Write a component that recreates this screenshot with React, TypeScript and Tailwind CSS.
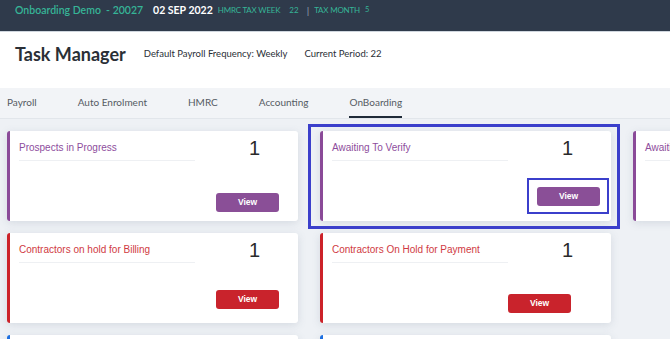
import React from "react";

type Card = {
  title: string;
  color: "purple" | "red" | "blue";
  btnLeft: string;
  btnTop: string;
  highlight?: boolean;
};

const cards: Card[] = [
  { title: "Prospects in Progress", color: "purple", btnLeft: "ml-[197px]", btnTop: "mt-[32px]" },
  { title: "Awaiting To Verify", color: "purple", btnLeft: "ml-[205px]", btnTop: "mt-[26px]", highlight: true },
  { title: "Awaiting To Verify", color: "purple", btnLeft: "ml-[205px]", btnTop: "mt-[26px]" },
  { title: "Contractors on hold for Billing", color: "red", btnLeft: "ml-[197px]", btnTop: "mt-[27px]" },
  { title: "Contractors On Hold for Payment", color: "red", btnLeft: "ml-[176px]", btnTop: "mt-[31px]" },
  { title: "", color: "blue", btnLeft: "", btnTop: "" },
  { title: "", color: "blue", btnLeft: "", btnTop: "" },
  { title: "", color: "blue", btnLeft: "", btnTop: "" },
];

function TaskCard({ c, idx }: { c: Card; idx: number }) {
  const border =
    c.color === "purple" ? "border-l-[#8a4a98]" : c.color === "red" ? "border-l-[#cc2229]" : "border-l-[#1d6fe0]";
  const titleColor = c.color === "purple" ? "text-[#8e4d9d]" : "text-[#d03a42]";
  const btn = c.color === "purple" ? "bg-[#8a4f97]" : "bg-[#c9232c]";
  if (idx === 5) return <div />;
  return (
    <div className="relative">
      {c.highlight && (
        <div className="absolute -left-[12px] -top-[7px] -right-[9px] -bottom-[8px] border-[3px] border-[#3b3fcb] pointer-events-none" />
      )}
      <div
        className={`bg-white rounded-[3px] border-l-[3px] ${border} shadow-[0_2px_8px_rgba(100,115,140,0.18)] h-[90px] pl-[9px] pt-[11px] flex flex-col`}
      >
        {c.title !== "" && (
          <>
            <div className="flex items-start">
              <div
                className={`w-[176px] border-b border-[#eef0f3] pb-[6px] text-[10px] leading-[12px] whitespace-nowrap font-['Liberation_Sans',sans-serif] ${titleColor}`}
              >
                {c.title}
              </div>
              <div className="ml-[54px] -mt-[5px] text-[20px] leading-[22px] text-[#2a2a2a] font-['Liberation_Sans',sans-serif]">1</div>
            </div>
            <div className={`relative ${c.btnLeft} ${c.btnTop} w-[63px]`}>
              {c.highlight && (
                <div className="absolute -left-[10px] -top-[9px] -right-[9px] -bottom-[8px] border-[2.5px] border-[#3b3fcb]" />
              )}
              <div
                className={`${btn} h-[19px] w-[63px] rounded-[3px] text-white text-[8.5px] font-bold flex items-center justify-center font-['Liberation_Sans',sans-serif]`}
              >
                View
              </div>
            </div>
          </>
        )}
      </div>
    </div>
  );
}

export default function App() {
  const tabs = ["Payroll", "Auto Enrolment", "HMRC", "Accounting", "OnBoarding"];
  return (
    <div className="w-[670px] h-[339px] overflow-hidden bg-[#eef1f5] font-['Lato',sans-serif]">
      <div className="h-[31px] bg-[#2f3a4b] flex items-start pt-[2px] pl-[15px] whitespace-nowrap">
        <span className="text-[10.5px] leading-[16px] text-[#36b597] font-semibold">Onboarding Demo&nbsp; - 20027</span>
        <span className="ml-[10px] text-[10.5px] leading-[16px] text-white font-bold">02 SEP 2022</span>
        <span className="ml-[5px] text-[8px] leading-[16px] text-[#36b597] tracking-[-0.2px]">HMRC TAX WEEK</span>
        <span className="ml-[9px] text-[8px] leading-[16px] text-[#36b597]">22</span>
        <span className="ml-[8px] text-[10px] leading-[16px] text-[#8fa0b0]">|</span>
        <span className="ml-[5px] text-[8px] leading-[16px] text-[#36b597] tracking-[-0.2px]">TAX MONTH</span>
        <span className="ml-[5px] text-[7.5px] leading-[16px] text-[#36b597]">5</span>
      </div>
      <div className="h-[1px] bg-[#cfd6de]" />
      <div className="h-[56px] bg-white flex items-center pl-[15px] pb-[12px] whitespace-nowrap">
        <span className="text-[18px] font-bold text-[#2a2f36]">Task Manager</span>
        <span className="ml-[18px] text-[9.5px] text-[#2a2f36]">Default Payroll Frequency: Weekly</span>
        <span className="ml-[17px] text-[9.5px] text-[#2a2f36]">Current Period: 22</span>
      </div>
      <div className="h-[31px] bg-[#f2f4f7] border-b border-[#e2e6eb] flex items-stretch pl-[7px] gap-[41px] whitespace-nowrap">
        {tabs.map((t) => (
          <div
            key={t}
            className={`flex items-center text-[10px] text-[#555b63] pt-[1px] ${
              t === "OnBoarding" ? "border-b-2 border-[#1f2a38]" : "border-b-2 border-transparent"
            }`}
          >
            {t}
          </div>
        ))}
      </div>
      <div className="pt-[12px] pl-[7px] grid grid-cols-[291px_291px_291px] gap-x-[22px] gap-y-[12px]">
        {cards.map((c, i) => (
          <TaskCard key={i} c={c} idx={i} />
        ))}
      </div>
    </div>
  );
}
